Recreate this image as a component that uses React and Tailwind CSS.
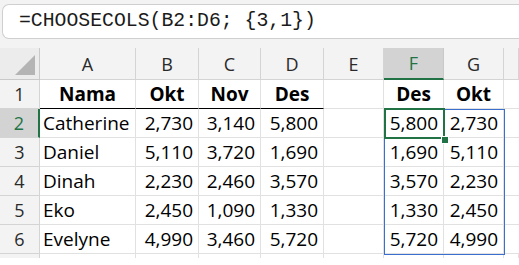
import React from "react";

const cols = ["A", "B", "C", "D", "E", "F", "G", ""];
const rows = [
  ["Nama", "Okt", "Nov", "Des", "", "Des", "Okt"],
  ["Catherine", "2,730", "3,140", "5,800", "", "5,800", "2,730"],
  ["Daniel", "5,110", "3,720", "1,690", "", "1,690", "5,110"],
  ["Dinah", "2,230", "2,460", "3,570", "", "3,570", "2,230"],
  ["Eko", "2,450", "1,090", "1,330", "", "1,330", "2,450"],
  ["Evelyne", "4,990", "3,460", "5,720", "", "5,720", "4,990"],
];

const font = { fontFamily: '"Open Sans", "Noto Sans", sans-serif' };

export default function App() {
  return (
    <div className="relative w-[519px] h-[265px] overflow-hidden bg-white" style={font}>
      <div className="h-[48px] bg-[#f3f3f3] pt-[4px] pl-[2px]">
        <div className="h-[35px] bg-white border border-r-0 border-[#cfcfcf] rounded-l-[7px] flex items-center pl-[16px]">
          <span
            className="text-[19.8px] text-[#1b1b1b] leading-none pt-[1px]"
            style={{ fontFamily: '"Liberation Mono", "DejaVu Sans Mono", monospace' }}
          >
            =CHOOSECOLS(B2:D6; {"{"}3,1{"}"})
          </span>
        </div>
      </div>
      <div className="grid grid-cols-[40px_96px_63px_62px_63px_60px_60px_60px_1fr] grid-rows-[32px_29px_29px_29px_29px_29px_29px_4px] text-[19px] text-black">
        {/* corner */}
        <div className="relative bg-[#ececec] border-r border-b border-[#c9c9c9]">
          <div className="absolute right-[4px] bottom-[4px] w-0 h-0 border-l-[20px] border-l-transparent border-b-[20px] border-b-[#b4b4b4]" />
        </div>
        {cols.map((c, i) =>
          c === "F" ? (
            <div
              key={i}
              className="bg-[#d3d3d3] border-r border-[#c9c9c9] border-b-2 border-b-[#217346] flex items-center justify-center text-[18px] text-[#217346] pt-[1px]"
            >
              {c}
            </div>
          ) : (
            <div
              key={i}
              className="bg-[#f3f3f3] border-r border-b border-[#d4d4d4] flex items-center justify-center text-[18px] text-[#2a2a2a] pt-[2px]"
            >
              {c}
            </div>
          )
        )}
        {rows.map((r, ri) => (
          <React.Fragment key={ri}>
            {ri === 1 ? (
              <div className="bg-[#d3d3d3] border-r-2 border-r-[#217346] border-b border-b-[#d4d4d4] flex items-center justify-center text-[18px] text-[#217346] pt-[1px]">
                {ri + 1}
              </div>
            ) : (
              <div className="bg-[#f3f3f3] border-r border-b border-[#d4d4d4] flex items-center justify-center text-[18px] text-[#2a2a2a] pt-[1px]">
                {ri + 1}
              </div>
            )}
            {r.map((v, ci) => {
              const header = ri === 0;
              const blackLine = header && ci < 4;
              const cls = [
                "flex items-center border-r border-[#e1e1e1] pt-[1px] whitespace-nowrap",
                blackLine ? "border-b border-b-black" : "border-b",
                header ? "justify-center font-bold" : ci === 0 ? "justify-start pl-[3px]" : "justify-end pr-[5px]",
              ].join(" ");
              return (
                <div key={ci} className={cls}>
                  {v}
                </div>
              );
            })}
            <div className="border-b border-[#e1e1e1]" />
          </React.Fragment>
        ))}
        {Array.from({ length: 9 }).map((_, i) => (
          <div key={"b" + i} className={i === 0 ? "bg-[#f3f3f3] border-r border-[#d4d4d4]" : "border-r border-[#e1e1e1]"} />
        ))}
      </div>
      {/* selection range */}
      <div className="absolute left-[384px] top-[109px] w-[121px] h-[146px] border border-[#3a6fd0] pointer-events-none" />
      {/* active cell */}
      <div className="absolute left-[384px] top-[108px] w-[61px] h-[31px] border-2 border-[#217346] pointer-events-none" />
      <div className="absolute left-[441px] top-[136px] w-[6px] h-[6px] bg-[#217346] border border-white box-content pointer-events-none" />
    </div>
  );
}
